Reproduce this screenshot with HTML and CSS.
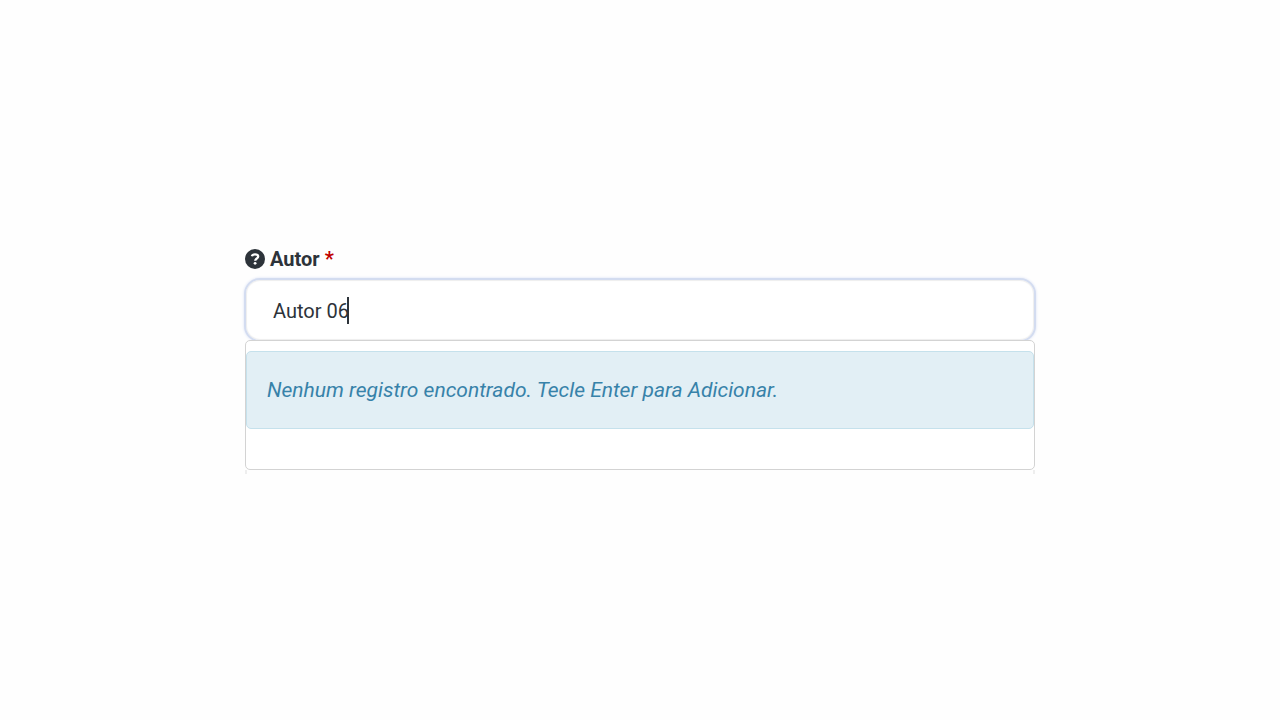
FILE: index.html
```
<!DOCTYPE html>
<html lang="pt-BR">

<head>
    <meta charset="UTF-8" />
    <title>Cadastro de Autor</title>
    <link rel="stylesheet" href="styles.css">
</head>

<body>
    <div class="campo">
        <label for="autor" class="rotulo">
            <svg class="ajuda" viewBox="0 0 20 20" aria-hidden="true">
                <circle cx="10" cy="10" r="10" fill="currentColor" />
                <path fill="none" stroke="#fff" stroke-width="2.300" d="M6.900 7.200Q7.400 5.400 10 5.400c2 0 3.200.8 3.200 2.200 0 2-3 1.900-3 4.200" />
                <circle cx="10.100" cy="14.300" r="1.400" fill="#fff" />
            </svg>
            <span>Autor</span>
            <span class="obrigatorio">*</span>
        </label>
        <div class="entrada">
            <input type="text" id="autor" value="Autor 06" autocomplete="off" spellcheck="false">
            <span class="cursor"></span>
        </div>
        <div class="sugestoes">
            <div class="aviso" role="status">Nenhum registro encontrado. Tecle Enter para Adicionar.</div>
        </div>
        <div class="borda-inferior"></div>
    </div>
</body>
</html>
```

FILE: styles.css
```
* {
    box-sizing: border-box;
}

body {
    margin: 0;
    min-height: 100vh;
    display: flex;
    align-items: center;
    justify-content: center;
    background-color: #fefefe;
    font-family: Roboto, sans-serif;
    font-size: 20px;
    color: #343a40;
}

.campo {
    width: 100%;
    max-width: 790px;
}

.rotulo {
    display: flex;
    align-items: center;
    gap: 5px;
    height: 26px;
    margin-bottom: 6px;
    font-weight: bold;
    color: #2d333a;
}

.ajuda {
    width: 20px;
    height: 20px;
}

.obrigatorio {
    color: #c00000;
}

.entrada {
    position: relative;
    margin: 0 -1px;
}

#autor {
    display: block;
    width: 100%;
    height: 64px;
    padding: 2px 27px 0;
    border: 2px solid #d3dcf0;
    border-radius: 16px;
    outline: none;
    background-color: #fff;
    box-shadow: 0 0 3px 0 #d8e0f5, inset 0 0 1px 1px #eee;
    font: inherit;
    color: #2d333a;
}

.cursor {
    position: absolute;
    top: 19px;
    left: 103px;
    width: 2px;
    height: 27px;
    background-color: #2d333a;
}

/* lista aberta logo abaixo do campo */
.sugestoes {
    position: relative;
    margin-top: -2px;
    padding: 10px 0 40px;
    border: 1px solid #d3d3d3;
    border-radius: 5px;
    background-color: #fff;
}

.aviso {
    padding: 26px 20px;
    border: 1px solid #c5e1ec;
    border-radius: 5px;
    background-color: #e2eff5;
    line-height: 24px;
    font-size: 21px;
    font-style: italic;
    color: #3782a9;
}

.borda-inferior {
    height: 4px;
    border: solid #eee;
    border-width: 0 2px;
}
```
